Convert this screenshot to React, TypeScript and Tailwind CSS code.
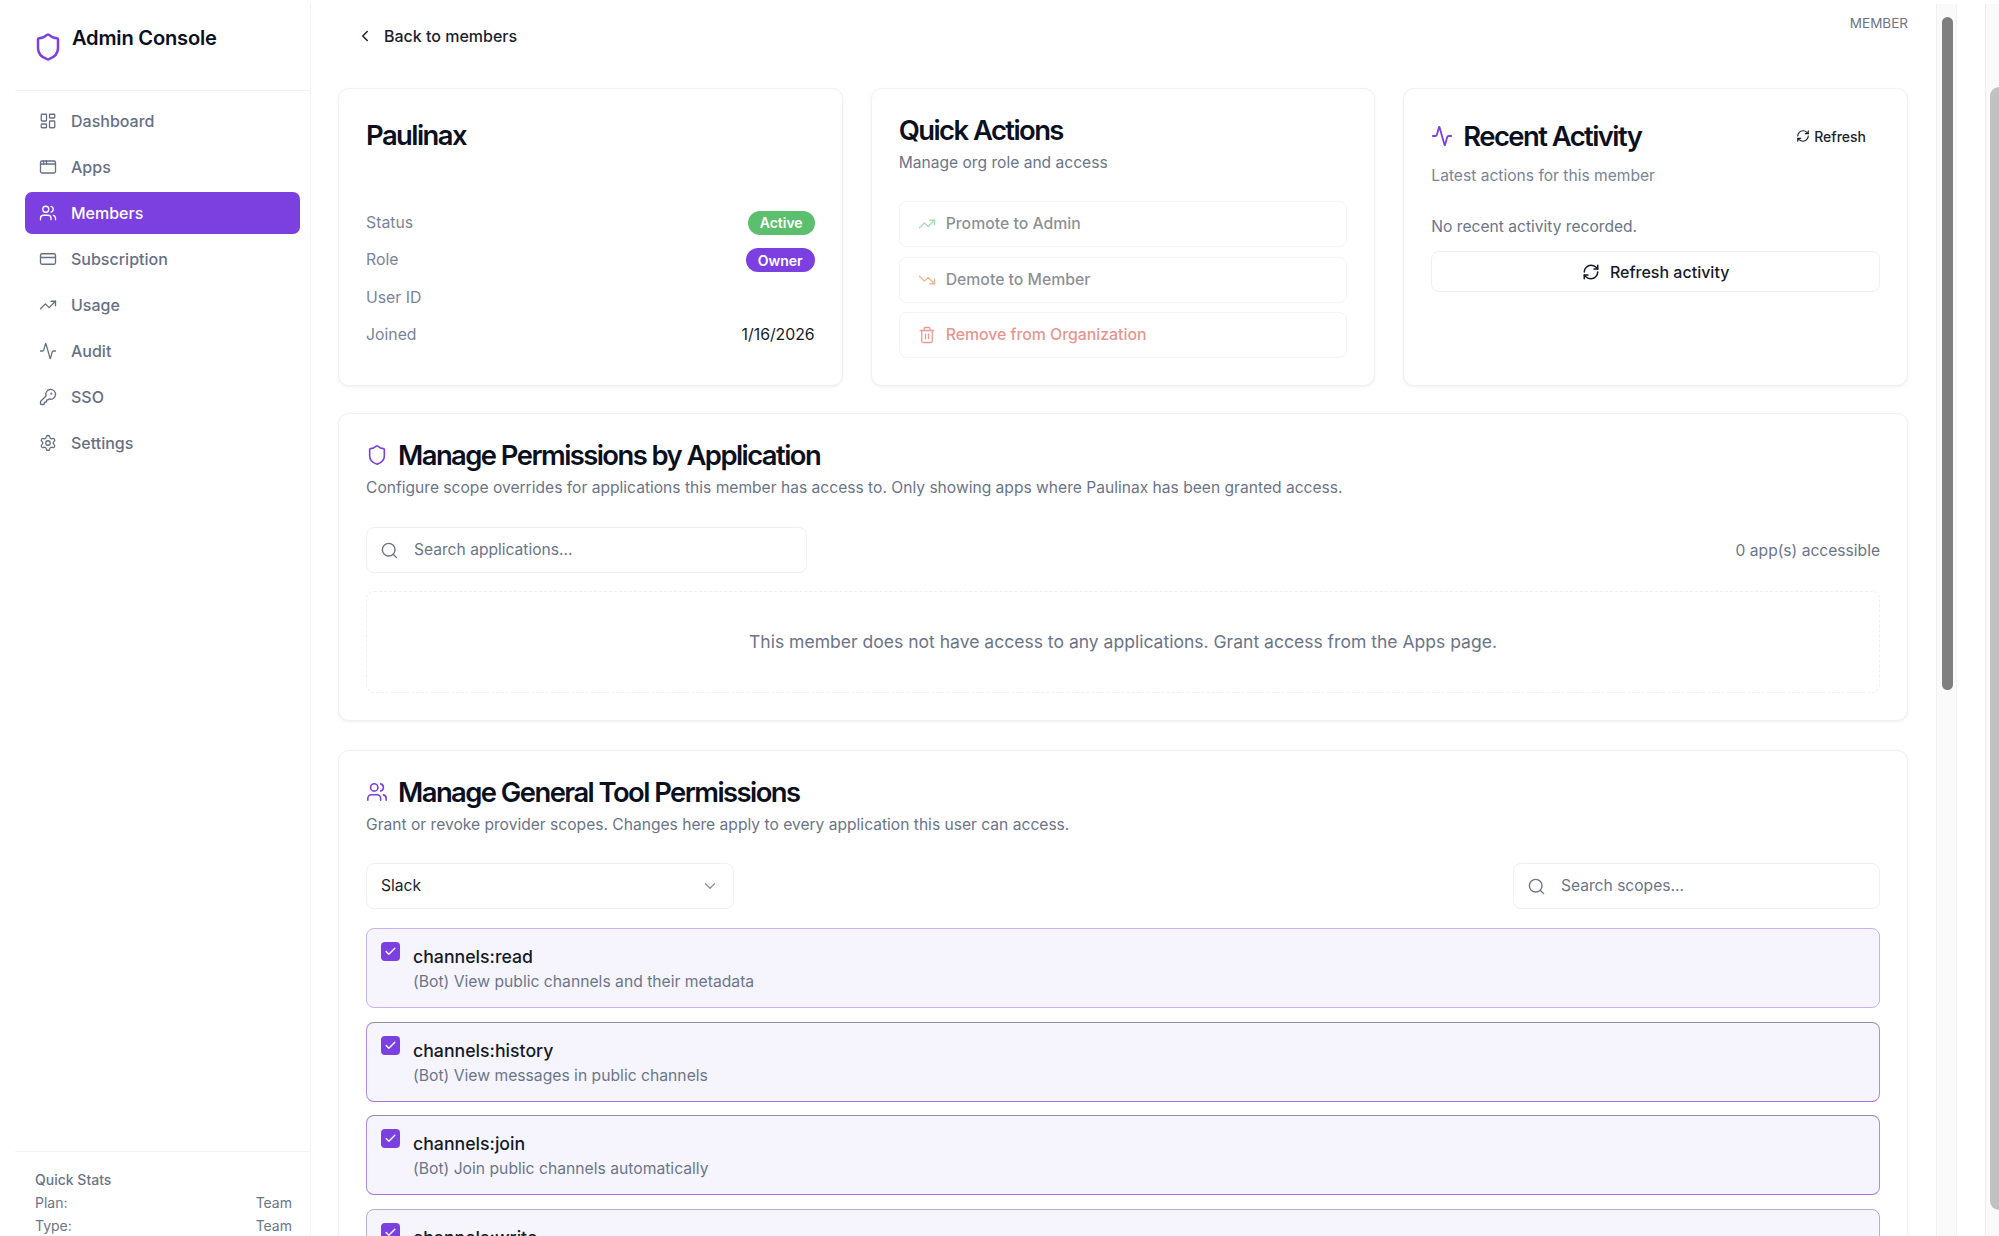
import {
  Activity,
  AppWindow,
  Check,
  ChevronDown,
  ChevronLeft,
  CreditCard,
  KeyRound,
  LayoutDashboard,
  RefreshCw,
  Search,
  Settings,
  Shield,
  Trash2,
  TrendingDown,
  TrendingUp,
  Users,
} from "lucide-react";
import type { ReactNode } from "react";

const navItems = [
  { label: "Dashboard", icon: LayoutDashboard },
  { label: "Apps", icon: AppWindow },
  { label: "Members", icon: Users, active: true },
  { label: "Subscription", icon: CreditCard },
  { label: "Usage", icon: TrendingUp },
  { label: "Audit", icon: Activity },
  { label: "SSO", icon: KeyRound },
  { label: "Settings", icon: Settings },
];

const scopes = [
  {
    name: "channels:read",
    desc: "(Bot) View public channels and their metadata",
    edge: "border-[1.5px] border-[#c6b4f1]",
  },
  {
    name: "channels:history",
    desc: "(Bot) View messages in public channels",
    edge: "border border-[#a98be8] border-t-[#8f8f9f] border-b-[#a970e2]",
  },
  {
    name: "channels:join",
    desc: "(Bot) Join public channels automatically",
    edge: "border border-[#a98be8] border-t-[#8f8f9f] border-b-[#a970e2]",
  },
  {
    name: "channels:write",
    desc: "(Bot) Manage public channels",
    edge: "border-[1.5px] border-[#b5aed0]",
  },
];

function Sidebar() {
  return (
    <aside className="ml-[15px] flex w-[296px] shrink-0 flex-col border-r border-[#f1f2f7]">
      <div className="flex h-[87px] shrink-0 items-start gap-[9px] border-b border-[#f3f4f8] pl-[18px] pt-[20px]">
        <Shield size={30} strokeWidth={2} className="mt-[8px] text-[#7c3fe0]" />
        <div className="text-[20.1px] font-semibold leading-[28px] tracking-[-0.2px] text-[#0b1020]">Admin Console</div>
      </div>
      <nav className="flex flex-col gap-[4px] px-[10px] pt-[9px]">
        {navItems.map((item) => {
          const Icon = item.icon;
          return (
            <div
              key={item.label}
              className={
                item.active
                  ? "flex h-[42px] items-center gap-[14px] rounded-[7px] bg-[#7c3fe0] pl-[14px] text-[16px] font-medium text-white"
                  : "flex h-[42px] items-center gap-[14px] rounded-[7px] pl-[14px] text-[16px] font-medium text-[#667085]"
              }
            >
              <Icon size={18} strokeWidth={1.75} />
              <span>{item.label}</span>
            </div>
          );
        })}
      </nav>
      <div className="mt-auto h-[85px] shrink-0 border-t border-[#f3f4f8] pl-[20px] pr-[18px] pt-[16px] text-[14px] leading-[23px] text-[#6b7588]">
        <div className="font-medium">Quick Stats</div>
        <div className="flex justify-between">
          <span>Plan:</span>
          <span>Team</span>
        </div>
        <div className="flex justify-between">
          <span>Type:</span>
          <span>Team</span>
        </div>
      </div>
    </aside>
  );
}

function Card(props: { className?: string; children: ReactNode }) {
  return (
    <section className={`rounded-[11px] border border-[#f0f1f6] bg-white px-[27px] shadow-[0_1px_3px_rgba(30,40,90,0.07)] ${props.className ?? ""}`}>
      {props.children}
    </section>
  );
}

function Title(props: { children: ReactNode }) {
  return <h2 className="text-[27.4px] font-semibold leading-[36px] tracking-[-1.55px] text-[#0b1020]">{props.children}</h2>;
}

function InfoRow(props: { label: string; children?: ReactNode }) {
  return (
    <div className="flex h-[37.5px] items-center justify-between text-[15.8px]">
      <span className="text-[#7a8496]">{props.label}</span>
      {props.children}
    </div>
  );
}

function ActionButton(props: { icon: ReactNode; label: string; className: string; danger?: boolean }) {
  return (
    <div className="flex h-[46px] items-center gap-[10px] rounded-[8px] border border-[#f4f5f9] pl-[18px] text-[15.8px] font-medium">
      <span className={`flex opacity-50 ${props.className}`}>{props.icon}</span>
      <span className={props.danger ? "text-[#d63d33] opacity-55" : "text-[#1a1f2e] opacity-50"}>{props.label}</span>
    </div>
  );
}

function SearchBox(props: { placeholder: string; className: string }) {
  return (
    <div className={`flex h-[46px] items-center gap-[15px] rounded-[8px] border border-[#eff0f5] bg-white pl-[13px] ${props.className}`}>
      <Search size={19} strokeWidth={1.75} className="shrink-0 text-[#6b7588]" />
      <input
        placeholder={props.placeholder}
        className="min-w-0 flex-1 bg-transparent text-[15.6px] outline-none placeholder:text-[#6b7588]"
      />
    </div>
  );
}

function ScopeRow(props: { name: string; desc: string; edge: string }) {
  return (
    <div className={`flex h-[80px] shrink-0 items-start gap-[13px] rounded-[8px] bg-[#f6f5fe] pl-[14px] pt-[13px] ${props.edge}`}>
      <div className="flex size-[19px] shrink-0 items-center justify-center rounded-[4px] bg-[#7c3fe0] text-white">
        <Check size={13} strokeWidth={2.5} />
      </div>
      <div className="pt-[2px]">
        <div className="text-[17.7px] font-medium leading-[26px] text-[#151a28]">{props.name}</div>
        <div className="text-[15.7px] leading-[24px] text-[#6b7588]">{props.desc}</div>
      </div>
    </div>
  );
}

export default function App() {
  return (
    <div className="flex h-screen overflow-hidden bg-white pt-[4px] [font-family:Inter,sans-serif]">
      <Sidebar />

      <main className="min-w-0 flex-1 overflow-hidden pl-[27px] pr-[28px]">
        <div className="flex h-[84px] items-start justify-between">
          <div className="mt-[12px] flex h-[40px] items-center gap-[10px] pl-[18px] text-[16px] font-medium text-[#1a1f2e]">
            <ChevronLeft size={18} strokeWidth={2} />
            <span>Back to members</span>
          </div>
          <div className="mt-[9px] text-[13.5px] leading-[20px] text-[#6b7588]">MEMBER</div>
        </div>

        <div className="grid h-[298px] grid-cols-3 gap-[28px]">
          <Card className="pt-[28px]">
            <Title>Paulinax</Title>
            <div className="mt-[51px]">
              <InfoRow label="Status">
                <span className="flex h-[24px] w-[67px] items-center justify-center rounded-full bg-[#5cbf6d] text-[14px] font-semibold text-white">Active</span>
              </InfoRow>
              <InfoRow label="Role">
                <span className="flex h-[24px] w-[69px] items-center justify-center rounded-full bg-[#7c3fe0] text-[14px] font-semibold text-white">Owner</span>
              </InfoRow>
              <InfoRow label="User ID" />
              <InfoRow label="Joined">
                <span className="text-[#151a28]">1/16/2026</span>
              </InfoRow>
            </div>
          </Card>

          <Card className="pt-[23px]">
            <Title>Quick Actions</Title>
            <p className="mt-[3px] text-[15.6px] leading-[24px] text-[#6b7588]">Manage org role and access</p>
            <div className="mt-[26px] flex flex-col gap-[9.5px]">
              <ActionButton icon={<TrendingUp size={18} strokeWidth={1.75} />} label="Promote to Admin" className="text-[#4cb963]" />
              <ActionButton icon={<TrendingDown size={18} strokeWidth={1.75} />} label="Demote to Member" className="text-[#ea6a1f]" />
              <ActionButton icon={<Trash2 size={18} strokeWidth={1.75} />} label="Remove from Organization" className="text-[#d63d33]" danger />
            </div>
          </Card>

          <Card className="pt-[29px]">
            <div className="flex items-center justify-between">
              <div className="flex items-center gap-[10px]">
                <Activity size={22} strokeWidth={2} className="text-[#7c3fe0]" />
                <Title>Recent Activity</Title>
              </div>
              <div className="flex items-center gap-[4px] pr-[14px] text-[14px] font-medium text-[#1a1f2e]">
                <RefreshCw size={14} strokeWidth={2} />
                <span>Refresh</span>
              </div>
            </div>
            <p className="mt-[10px] text-[15.6px] leading-[24px] text-[#7a8496]">Latest actions for this member</p>
            <p className="mt-[27px] text-[15.6px] leading-[24px] text-[#6b7588]">No recent activity recorded.</p>
            <div className="mt-[12px] flex h-[41px] items-center justify-center gap-[10px] rounded-[8px] border border-[#eff0f5] text-[16px] font-medium text-[#151a28]">
              <RefreshCw size={18} strokeWidth={2} />
              <span>Refresh activity</span>
            </div>
          </Card>
        </div>

        <Card className="mt-[27px] h-[308px] pt-[23px]">
          <div className="flex items-center gap-[10px]">
            <Shield size={22} strokeWidth={1.75} className="text-[#7c3fe0]" />
            <Title>Manage Permissions by Application</Title>
          </div>
          <p className="mt-[3px] text-[15.6px] leading-[24px] text-[#6b7588]">
            Configure scope overrides for applications this member has access to. Only showing apps where Paulinax has been granted access.
          </p>
          <div className="mt-[27px] flex items-center justify-between">
            <SearchBox placeholder="Search applications..." className="w-[441px]" />
            <span className="pt-[1px] text-[15.6px] text-[#6b7588]">0 app(s) accessible</span>
          </div>
          <div className="mt-[18px] flex h-[102px] items-center justify-center rounded-[8px] border border-dashed border-[#eff0f5] pt-[1px] text-[17.55px] text-[#6b7588]">
            This member does not have access to any applications. Grant access from the Apps page.
          </div>
        </Card>

        <Card className="mt-[29px] h-[700px] pt-[23px]">
          <div className="flex items-center gap-[10px]">
            <Users size={22} strokeWidth={1.75} className="text-[#7c3fe0]" />
            <Title>Manage General Tool Permissions</Title>
          </div>
          <p className="mt-[3px] text-[15.6px] leading-[24px] text-[#6b7588]">
            Grant or revoke provider scopes. Changes here apply to every application this user can access.
          </p>
          <div className="mt-[26px] flex items-center justify-between">
            <div className="flex h-[46px] w-[368px] items-center justify-between rounded-[8px] border border-[#eff0f5] pl-[14px] pr-[14px] text-[15.6px] text-[#1a1f2e]">
              <span>Slack</span>
              <ChevronDown size={18} strokeWidth={1.75} className="text-[#8a93a3]" />
            </div>
            <SearchBox placeholder="Search scopes..." className="w-[367px]" />
          </div>
          <div className="mt-[19px] flex flex-col gap-[13.5px]">
            {scopes.map((scope) => (
              <ScopeRow key={scope.name} name={scope.name} desc={scope.desc} edge={scope.edge} />
            ))}
          </div>
        </Card>
      </main>

      {/* scrollbars, drawn since the real ones would not match */}
      <div className="w-[21px] shrink-0 border-x border-[#f0f0f0] bg-[#fafafa] pl-[5px] pr-[3px] pt-[13px]">
        <div className="h-[673px] rounded-full bg-[#7f7f7f]" />
      </div>
      <div className="w-[28px] shrink-0" />
      <div className="w-[14px] shrink-0 border-l border-[#ececec] bg-[#fafafa] pl-[4px] pt-[83px]">
        <div className="h-[1123px] rounded-l-full bg-[#c1c1c1]" />
      </div>
    </div>
  );
}
